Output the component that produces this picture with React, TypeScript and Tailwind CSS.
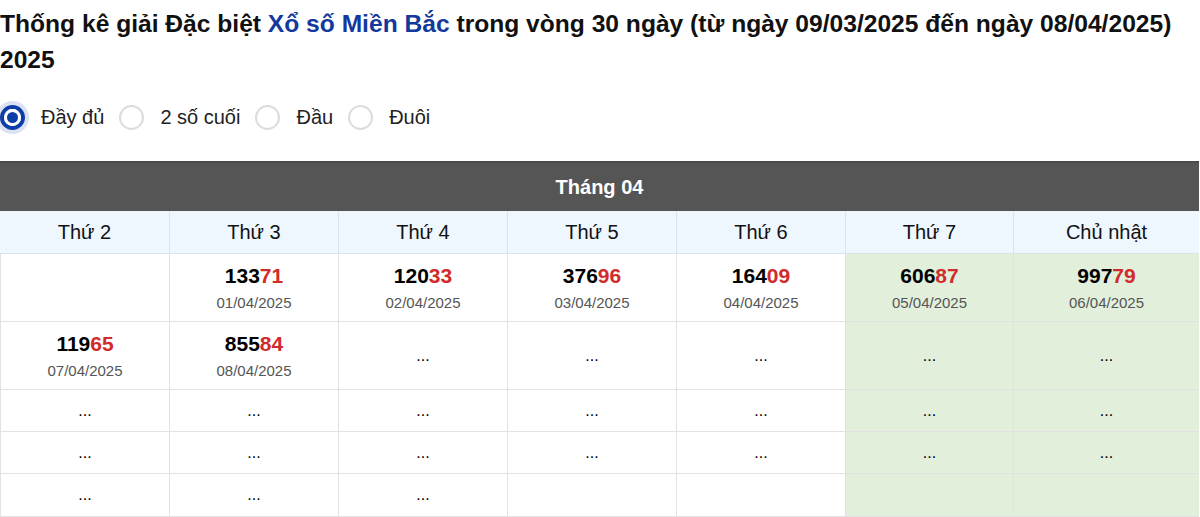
import React, { useState } from 'react';

type Cell = { num?: string; date?: string; dots?: boolean } | null;

const days = ['Thứ 2', 'Thứ 3', 'Thứ 4', 'Thứ 5', 'Thứ 6', 'Thứ 7', 'Chủ nhật'];

const rows: Cell[][] = [
  [
    null,
    { num: '13371', date: '01/04/2025' },
    { num: '12033', date: '02/04/2025' },
    { num: '37696', date: '03/04/2025' },
    { num: '16409', date: '04/04/2025' },
    { num: '60687', date: '05/04/2025' },
    { num: '99779', date: '06/04/2025' },
  ],
  [
    { num: '11965', date: '07/04/2025' },
    { num: '85584', date: '08/04/2025' },
    { dots: true },
    { dots: true },
    { dots: true },
    { dots: true },
    { dots: true },
  ],
  [{ dots: true }, { dots: true }, { dots: true }, { dots: true }, { dots: true }, { dots: true }, { dots: true }],
  [{ dots: true }, { dots: true }, { dots: true }, { dots: true }, { dots: true }, { dots: true }, { dots: true }],
  [{ dots: true }, { dots: true }, { dots: true }, null, null, null, null],
];

const options = ['Đầy đủ', '2 số cuối', 'Đầu', 'Đuôi'];

const App: React.FC = () => {
  const [mode, setMode] = useState(0);

  return (
    <div className="w-[1200px] bg-white text-[#111] font-['Liberation_Sans',Arial,sans-serif]">
      <h1 className="text-[24.6px] font-bold leading-[36px] pt-[6px]">
        Thống kê giải Đặc biệt <span className="text-[#13399d]">Xổ số Miền Bắc</span> trong vòng 30 ngày (từ ngày
        09/03/2025 đến ngày 08/04/2025) 2025
      </h1>

      <div className="flex items-center mt-[24px] h-[30px] text-[20px] text-[#222]">
        {options.map((o, i) => (
          <label key={o} className="flex items-center cursor-pointer" onClick={() => setMode(i)}>
            <span
              className={
                i === mode
                  ? 'w-[25px] h-[25px] rounded-full border-[4px] border-[#0d3ea8] bg-white shadow-[0_0_0_4px_rgba(13,62,168,0.15)]'
                  : 'w-[25px] h-[25px] rounded-full border-2 border-[#dcdcdc] bg-white'
              }
            >
              {i === mode && <span className="block w-full h-full rounded-full border-[3px] border-white bg-[#0d3ea8]" />}
            </span>
            <span className="ml-[16px] mr-[15px]">{o}</span>
          </label>
        ))}
      </div>

      <div className="mt-[29px] w-[1199px] border-b border-[#e2e2e2]">
        <div className="h-[50px] bg-[#555555] flex items-center justify-center text-white text-[20px] font-bold border-t-2 border-[#4a4a4a]">
          Tháng 04
        </div>
        <div className="grid grid-cols-[169px_169px_169px_169px_169px_168px_1fr]">
          {days.map((d) => (
            <div
              key={d}
              className="h-[43px] bg-[#eef6fe] border-l border-b border-[#dde3ea] first:border-l-0 flex items-center justify-center text-[20px] text-[#111]"
            >
              {d}
            </div>
          ))}
          {rows.map((r, ri) =>
            r.map((c, ci) => {
              const weekend = ci >= 5;
              const tall = ri < 2;
              return (
                <div
                  key={`${ri}-${ci}`}
                  className={`${tall ? 'h-[68px]' : 'h-[42px]'} ${weekend ? 'bg-[#e1efdb]' : 'bg-white'} ${
                    ri === rows.length - 1 ? '' : 'border-b'
                  } border-l first:border-l-0 border-[#e2e2e2] flex flex-col items-center justify-center`}
                >
                  {c?.num && (
                    <>
                      <div className="text-[21px] font-bold leading-[24px]">
                        <span className="text-black">{c.num.slice(0, 3)}</span>
                        <span className="text-[#d12b2b]">{c.num.slice(3)}</span>
                      </div>
                      <div className="text-[15px] text-[#555] mt-[6px] leading-[18px]">{c.date}</div>
                    </>
                  )}
                  {c?.dots && <div className="text-[16px] leading-none text-black">...</div>}
                </div>
              );
            })
          )}
        </div>
      </div>
    </div>
  );
};

export default App;
